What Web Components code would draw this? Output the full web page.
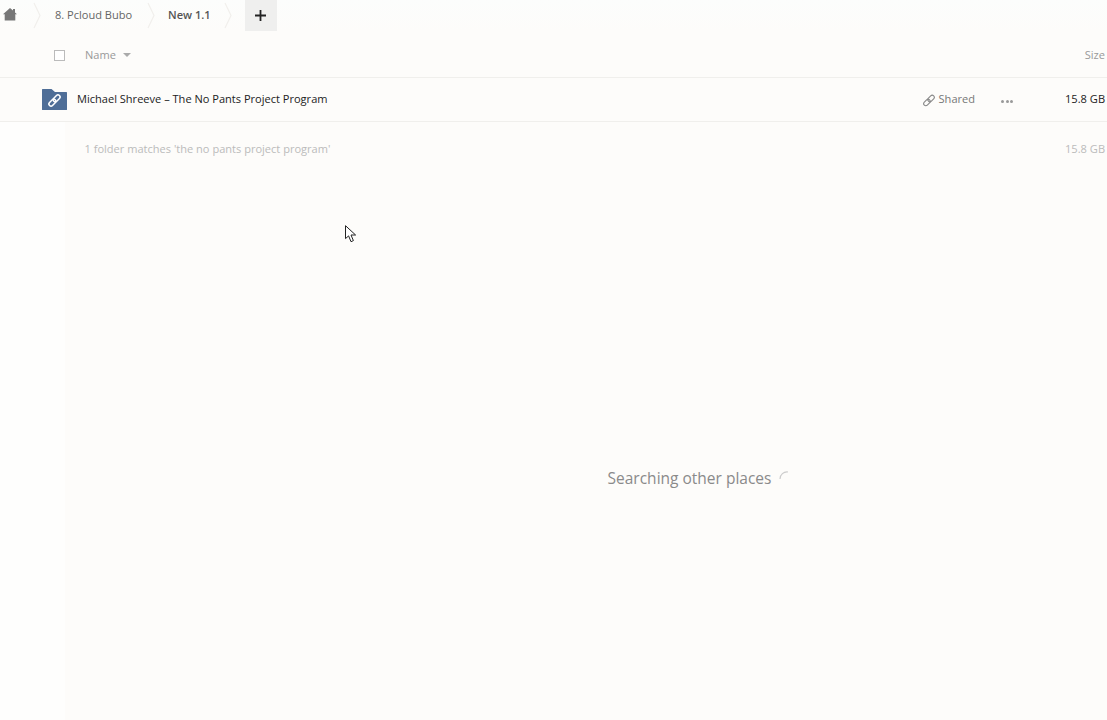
<!DOCTYPE html>
<html lang="en"><head><meta charset="utf-8"><title>Search</title>
<style>
html,body{margin:0;height:100%;background:#fdfcfa}
body{font-family:"Open Sans","Liberation Sans",sans-serif;overflow:hidden}
</style></head><body>
<file-page>
  <crumb-bar>
    <crumb-item style="--pad:14px;--w:77px;--gap:15px">8. Pcloud Bubo</crumb-item>
    <crumb-item current style="--pad:13px;--w:42px;--gap:14px">New 1.1</crumb-item>
  </crumb-bar>
  <list-header></list-header>
  <file-row name="Michael Shreeve – The No Pants Project Program" size="15.8 GB"></file-row>
  <list-summary text="1 folder matches 'the no pants project program'" size="15.8 GB"></list-summary>
  <search-status>Searching other places</search-status>
  <mouse-pointer></mouse-pointer>
</file-page>
<script>
function define(name,html,init){
  customElements.define(name,class extends HTMLElement{
    connectedCallback(){
      if(this.shadowRoot)return;
      const r=this.attachShadow({mode:'open'});
      r.innerHTML=html;
      if(init)init(this,r);
    }
  });
}
const chevron=`<svg width="8" height="31" viewBox="0 0 8 31" fill="none" stroke="#f1efec" stroke-width="1.2" style="display:block"><path d="M1 3 L7 15.5 L1 28"/></svg>`;
define('file-page',`<style>
:host{display:flex;flex-direction:column;height:720px;position:relative;overflow:hidden;background:#fdfcfa}
.strip{position:absolute;left:0;top:122px;bottom:0;width:65px;background:#fefefd}
::slotted(*){position:relative}
</style><div class="strip"></div><slot></slot>`);
define('crumb-bar',`<style>
:host{display:flex;align-items:center;height:31px;background:linear-gradient(#fcfdfc,#fdfcfa);flex:none}
.home{width:33px;height:31px;display:flex;align-items:flex-start;flex:none}
.home svg{margin:8px 0 0 3px}
.chev{display:block;flex:none;height:31px}
.add{width:32px;height:31px;background:#efefee;display:flex;align-items:center;justify-content:center;margin-left:13px;flex:none;box-sizing:border-box;padding-right:1px}
</style>
<div class="home"><svg width="14" height="13" viewBox="0 0 14 13"><path fill="#777" d="M7 0 L10 2.6 V1 H12 V4.4 L14 6.3 H12.3 V12.5 H1.7 V6.3 H0 Z"/></svg></div>
<span class="chev">${chevron}</span>
<slot></slot>
<div class="add"><svg width="11" height="11" viewBox="0 0 11 11"><path fill="#222" d="M4.6 0h1.8v4.6H11v1.8H6.4V11H4.6V6.4H0V4.6h4.6z"/></svg></div>`);
define('crumb-item',`<style>
:host{display:flex;align-items:center;height:31px;font-size:11.05px;color:#666;flex:none}
:host([current]){color:#555;font-weight:600}
.t{padding:0 0 1px var(--pad);width:var(--w);white-space:nowrap;margin-top:-1px}
.c{margin-left:var(--gap);height:31px}
</style><span class="t"><slot></slot></span><span class="c">${chevron}</span>`);
define('list-header',`<style>
:host{display:flex;align-items:center;height:46px;border-bottom:1px solid #f0efec;font-size:11.05px;color:#999;flex:none;padding-right:2px}
.box{width:9px;height:9px;border:1px solid #bbb;background:#fff;margin-left:54px;flex:none;margin-top:3px}
.name{margin-left:20px}
.car{width:0;height:0;border:4px solid transparent;border-top:4px solid #aaa;border-bottom:0;margin-left:7px;margin-top:2px}
.size{margin-left:auto}
</style><span class="box"></span><span class="name">Name</span><span class="car"></span><span class="size">Size</span>`);
define('file-row',`<style>
:host{display:flex;align-items:center;height:43px;border-bottom:1px solid #f0efec;font-size:11.05px;color:#222;flex:none;padding-right:2px}
.ic{margin-left:42px;flex:none;display:block}
.name{margin-left:10px;white-space:nowrap;color:#222;margin-top:-2px}
.shared{margin-left:auto;display:flex;align-items:center;gap:4px;color:#777;margin-top:-2px}
.dots{display:flex;gap:1.5px;margin-left:26px;margin-top:3px}
.dots i{width:3px;height:3px;border-radius:50%;background:#999}
.size{width:40px;white-space:nowrap;text-align:right;margin-left:52px;font-size:11.1px;font-weight:500;color:#222;margin-top:-2px}
</style>
<svg class="ic" width="25" height="21" viewBox="0 0 25 21"><path fill="#4f6e97" d="M0 .6C0 .3.3 0 .6 0H9.5l3.5 3h11.4c.3 0 .6.3.6.6V20.4c0 .3-.3.6-.6.6H.6C.3 21 0 20.7 0 20.4z"/><g fill="none" stroke="#fff" stroke-width="1.5" stroke-linecap="round" transform="rotate(-45 12.5 11.5)"><rect x="5.5" y="9.4" width="8" height="4.2" rx="2.1"/><rect x="11.5" y="9.4" width="8" height="4.2" rx="2.1"/></g></svg>
<span class="name"></span>
<span class="shared"><svg width="12" height="13" viewBox="0 0 12 12" style="margin-top:4px"><g fill="none" stroke="#888" stroke-width="1.1" transform="rotate(-45 6 6)"><rect x="-.6" y="3.9" width="7.4" height="4.2" rx="2.1"/><rect x="5.2" y="3.9" width="7.4" height="4.2" rx="2.1"/></g></svg><span>Shared</span></span>
<span class="dots"><i></i><i></i><i></i></span>
<span class="size"></span>`,(h,r)=>{r.querySelector('.name').textContent=h.getAttribute('name');r.querySelector('.size').textContent=h.getAttribute('size');});
define('list-summary',`<style>
:host{display:flex;align-items:center;height:53px;font-size:11.05px;color:#bbb;flex:none;padding:0 2px 0 84.5px}
.size{margin-left:auto;font-size:11.1px;width:40px;white-space:nowrap;text-align:right}
</style><span class="text"></span><span class="size"></span>`,(h,r)=>{r.querySelector('.text').textContent=h.getAttribute('text');r.querySelector('.size').textContent=h.getAttribute('size');});
define('search-status',`<style>
:host{display:flex;align-items:center;justify-content:center;gap:8px;font-size:15.5px;color:#8a8a8a;margin-top:291px;padding-left:291px;height:24px;flex:none}
svg{flex:none;margin-top:-3px}
</style><span><slot></slot></span><svg width="11" height="11" viewBox="0 0 11 11" fill="none" stroke="#ccc" stroke-width="1.2"><path d="M1 8 A7 7 0 0 1 9 1"/></svg>`);
define('mouse-pointer',`<style>
:host{position:absolute!important;left:345px;top:225px;width:12px;height:18px}
svg{display:block}
</style><svg width="12" height="18" viewBox="0 0 12 18"><path fill="#fff" stroke="#222" stroke-width="1" d="M.5.7V13.6L3.6 10.9 6 16.7 8.4 15.6 6 10H10.6Z"/></svg>`);
</script>
</body></html>
